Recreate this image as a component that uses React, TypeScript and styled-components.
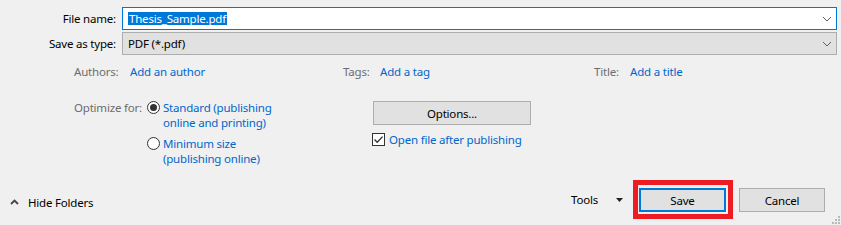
import React from "react";
import styled, { createGlobalStyle } from "styled-components";

const Global = createGlobalStyle`
  html, body { margin: 0; padding: 0; background: #f0f0f0; }
  body {
    font-family: "Noto Sans", "Segoe UI", sans-serif;
    font-size: 11.5px;
    letter-spacing: -0.2px;
    color: #000;
  }
`;

const Dialog = styled.div`
  width: 841px;
  height: 225px;
  box-sizing: border-box;
  background: #f0f0f0;
  display: flex;
  flex-direction: column;
  padding-top: 7px;
  overflow: hidden;
  white-space: nowrap;
`;

const FieldGrid = styled.div`
  display: grid;
  grid-template-columns: 122px 715px;
  row-gap: 2px;
`;

const FieldLabel = styled.label`
  text-align: right;
  padding-right: 6px;
  line-height: 23px;
  color: #000;
`;

const Combo = styled.div<{ $focused?: boolean }>`
  height: 23px;
  box-sizing: border-box;
  border: 1px solid ${(p) => (p.$focused ? "#0078d7" : "#adadad")};
  background: ${(p) => (p.$focused ? "#ffffff" : "#e1e1e1")};
  display: flex;
  align-items: center;
  padding: 0 4px 0 5px;
`;

const ComboText = styled.span`
  flex: 1;
  line-height: 13px;
`;

const Selected = styled.span`
  background: #0078d7;
  color: #fff;
  display: inline-block;
  line-height: 13px;
  padding: 0 1px;
`;

const Chevron = () => (
  <svg width="10" height="6" viewBox="0 0 10 6">
    <path d="M1 1 L5 5 L9 1" fill="none" stroke="#606060" strokeWidth="1" />
  </svg>
);

const MetaRow = styled.div`
  display: grid;
  grid-template-columns: 56px 213px 37px 214px 36px auto;
  padding-left: 74px;
  margin-top: 9px;
  line-height: 15px;
`;

const MetaLabel = styled.span`
  color: #6d6d6d;
`;

const Link = styled.span`
  color: #0066cc;
`;

const OptimizeGrid = styled.div`
  display: grid;
  grid-template-columns: 73px 226px auto;
  padding-left: 74px;
  margin-top: 21px;
  line-height: 15px;
`;

const RadioList = styled.div`
  display: flex;
  flex-direction: column;
  gap: 6px;
`;

const RadioItem = styled.div`
  display: flex;
  gap: 3px;
  align-items: flex-start;
`;

const RadioCircle = styled.span<{ $checked?: boolean }>`
  width: 13px;
  height: 13px;
  box-sizing: border-box;
  border: 1px solid #333;
  border-radius: 50%;
  background: #fff;
  margin-top: 1px;
  display: flex;
  align-items: center;
  justify-content: center;
  flex-shrink: 0;
  &::after {
    content: "";
    width: 7px;
    height: 7px;
    border-radius: 50%;
    background: ${(p) => (p.$checked ? "#333" : "transparent")};
  }
`;

const OptionsCol = styled.div`
  display: flex;
  flex-direction: column;
  align-items: flex-start;
  margin-top: 1px;
`;

const PlainButton = styled.button<{ $w: number }>`
  width: ${(p) => p.$w}px;
  height: 24px;
  box-sizing: border-box;
  border: 1px solid #adadad;
  background: #e1e1e1;
  font: inherit;
  letter-spacing: inherit;
  color: #000;
  padding: 0;
  margin: 0;
`;

const CheckRow = styled.div`
  display: flex;
  align-items: center;
  gap: 4px;
  margin-top: 7px;
  margin-left: -1px;
`;

const CheckBox = styled.span`
  width: 13px;
  height: 13px;
  box-sizing: border-box;
  border: 1px solid #333;
  background: #fff;
  display: flex;
  align-items: center;
  justify-content: center;
`;

const Footer = styled.div`
  margin-top: auto;
  margin-bottom: 6px;
  height: 39px;
  display: flex;
  align-items: center;
  position: relative;
`;

const HideFolders = styled.div`
  display: flex;
  align-items: center;
  gap: 9px;
  padding-left: 10px;
  margin-top: 5px;
`;

const Spacer = styled.div`
  flex: 1;
`;

const Tools = styled.div`
  display: flex;
  align-items: center;
  gap: 18px;
  margin-right: 10px;
`;

const Highlight = styled.div`
  border: 5px solid #ed1c24;
  padding: 3px 2px 2px 1px;
  margin-right: 6px;
`;

const PrimaryButton = styled.button`
  width: 87px;
  height: 24px;
  box-sizing: border-box;
  border: 2px solid #0078d7;
  background: #e1e1e1;
  font: inherit;
  letter-spacing: inherit;
  color: #000;
  padding: 0;
  margin: 0;
  display: block;
`;

const CancelWrap = styled.div`
  margin-right: 16px;
  margin-top: 1px;
`;

const Grip = styled.svg`
  position: absolute;
  right: 1px;
  bottom: -5px;
`;

export default function App() {
  return (
    <>
      <Global />
      <Dialog>
        <FieldGrid>
          <FieldLabel>File name:</FieldLabel>
          <Combo $focused>
            <ComboText>
              <Selected>Thesis_Sample.pdf</Selected>
            </ComboText>
            <Chevron />
          </Combo>
          <FieldLabel>Save as type:</FieldLabel>
          <Combo>
            <ComboText>PDF (*.pdf)</ComboText>
            <Chevron />
          </Combo>
        </FieldGrid>

        <MetaRow>
          <MetaLabel>Authors:</MetaLabel>
          <Link>Add an author</Link>
          <MetaLabel>Tags:</MetaLabel>
          <Link>Add a tag</Link>
          <MetaLabel>Title:</MetaLabel>
          <Link>Add a title</Link>
        </MetaRow>

        <OptimizeGrid>
          <MetaLabel>Optimize for:</MetaLabel>
          <RadioList>
            <RadioItem>
              <RadioCircle $checked />
              <Link>
                Standard (publishing
                <br />
                online and printing)
              </Link>
            </RadioItem>
            <RadioItem>
              <RadioCircle />
              <Link>
                Minimum size
                <br />
                (publishing online)
              </Link>
            </RadioItem>
          </RadioList>
          <OptionsCol>
            <PlainButton $w={158}>Options...</PlainButton>
            <CheckRow>
              <CheckBox>
                <svg width="11" height="11" viewBox="0 0 11 11">
                  <path d="M1.5 5.5 L4.2 8.3 L9.6 2.6" fill="none" stroke="#333" strokeWidth="1.3" />
                </svg>
              </CheckBox>
              <Link>Open file after publishing</Link>
            </CheckRow>
          </OptionsCol>
        </OptimizeGrid>

        <Footer>
          <HideFolders>
            <svg width="9" height="6" viewBox="0 0 9 6">
              <path d="M1 5 L4.5 1.5 L8 5" fill="none" stroke="#444" strokeWidth="1.8" />
            </svg>
            <span>Hide Folders</span>
          </HideFolders>
          <Spacer />
          <Tools>
            <span>Tools</span>
            <svg width="7" height="4" viewBox="0 0 7 4">
              <path d="M0 0 H7 L3.5 4 Z" fill="#222" />
            </svg>
          </Tools>
          <Highlight>
            <PrimaryButton>Save</PrimaryButton>
          </Highlight>
          <CancelWrap>
            <PlainButton $w={86}>Cancel</PlainButton>
          </CancelWrap>
          <Grip width="9" height="9" viewBox="0 0 9 9">
            {[
              [7, 1],
              [7, 4],
              [4, 4],
              [7, 7],
              [4, 7],
              [1, 7],
            ].map(([x, y], i) => (
              <rect key={i} x={x} y={y} width="2" height="2" fill="#b8b8b8" />
            ))}
          </Grip>
        </Footer>
      </Dialog>
    </>
  );
}
